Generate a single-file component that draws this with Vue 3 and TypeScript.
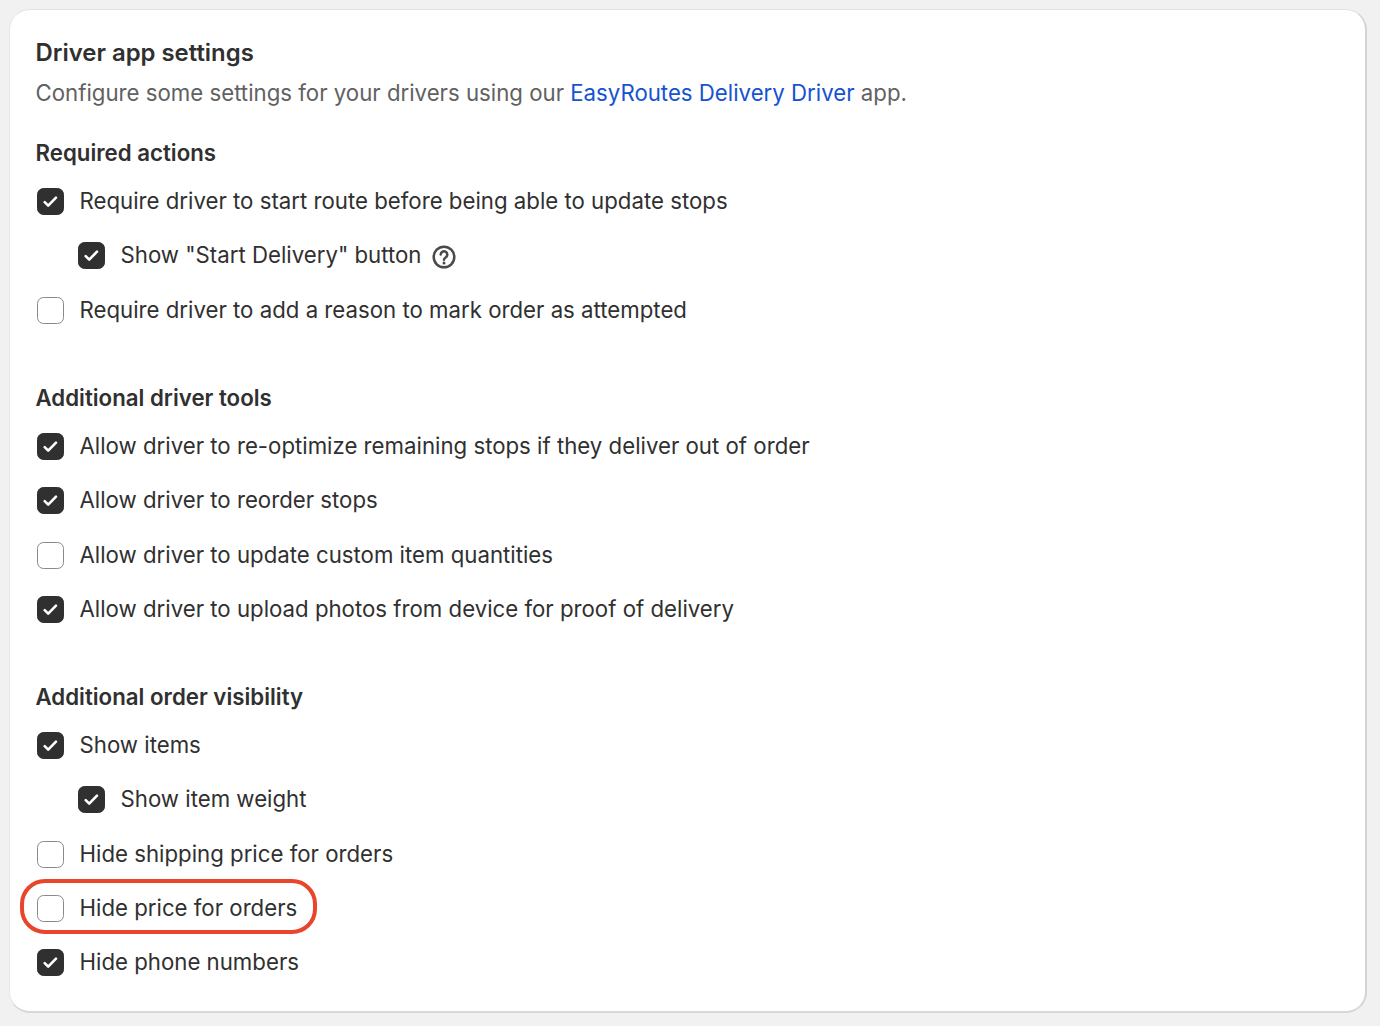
<script setup lang="ts">
interface Row { label: string; checked: boolean; nested?: boolean; help?: boolean; marked?: boolean }
interface Section { title: string; rows: Row[] }
const sections: Section[] = [
  { title: 'Required actions', rows: [
    { label: 'Require driver to start route before being able to update stops', checked: true },
    { label: 'Show "Start Delivery" button', checked: true, nested: true, help: true },
    { label: 'Require driver to add a reason to mark order as attempted', checked: false },
  ] },
  { title: 'Additional driver tools', rows: [
    { label: 'Allow driver to re-optimize remaining stops if they deliver out of order', checked: true },
    { label: 'Allow driver to reorder stops', checked: true },
    { label: 'Allow driver to update custom item quantities', checked: false },
    { label: 'Allow driver to upload photos from device for proof of delivery', checked: true },
  ] },
  { title: 'Additional order visibility', rows: [
    { label: 'Show items', checked: true },
    { label: 'Show item weight', checked: true, nested: true },
    { label: 'Hide shipping price for orders', checked: false },
    { label: 'Hide price for orders', checked: false, marked: true },
    { label: 'Hide phone numbers', checked: true },
  ] },
]
</script>

<template>
  <div class="page">
    <main class="card">
      <h1 class="title">Driver app settings</h1>
      <p class="sub">Configure some settings for your drivers using our <a class="link">EasyRoutes Delivery Driver</a> app.</p>
      <section v-for="s in sections" :key="s.title" class="section">
        <h2 class="heading">{{ s.title }}</h2>
        <div class="rows">
          <label v-for="r in s.rows" :key="r.label" class="row" :class="{ nested: r.nested }">
            <span class="box" :class="{ on: r.checked }">
              <svg v-if="r.checked" viewBox="0 0 27 27" width="27" height="27">
                <path d="M7.7 14.2l3.5 3.5L19 9.7" fill="none" stroke="#fff" stroke-width="2.6" stroke-linecap="round" stroke-linejoin="round" />
              </svg>
            </span>
            <span class="text">{{ r.label }}</span>
            <svg v-if="r.help" class="help" viewBox="0 0 24 24" width="24" height="24">
              <circle cx="12" cy="12" r="10.3" fill="none" stroke="#4a4a4a" stroke-width="2.5" />
              <path d="M8.7 9.6a3.3 3.2 0 1 1 5.2 2.6c-1.2.8-1.9 1.4-1.9 2.6" fill="none" stroke="#4a4a4a" stroke-width="2.5" stroke-linecap="round" />
              <circle cx="12" cy="18" r="1.5" fill="#4a4a4a" />
            </svg>
            <span v-if="r.marked" class="mark"></span>
          </label>
        </div>
      </section>
    </main>
  </div>
</template>

<style>
html, body { margin: 0; background: #f1f1f1; }
</style>

<style scoped>
.page {
  box-sizing: border-box;
  width: 1380px;
  height: 1026px;
  padding: 9px 13px 0 9px;
  background: #f1f1f1;
  overflow: hidden;
  font-family: Inter, "Liberation Sans", sans-serif;
}
.card {
  box-sizing: border-box;
  height: 1004px;
  padding: 26px 26px 0;
  background: #fff;
  border-radius: 21px;
  border: 1px solid #e3e3e3;
  border-left-color: #e6e6e6;
  border-bottom: 2px solid #d9d9d9;
  border-right: 2px solid #d4d4d4;
}
.title {
  margin: 0 0 0 -0.5px;
  height: 34px;
  font-size: 23.9px;
  line-height: 34px;
  font-weight: 600;
  color: #303030;
}
.sub {
  margin: 5.5px 0 0 -0.5px;
  font-size: 22.22px;
  line-height: 34px;
  color: #616161;
}
.link { color: #1553d0; }
.section { margin-top: 28.5px; }
.section + .section { margin-top: 59.2px; }
.heading {
  margin: 0 0 0 -0.5px;
  height: 30px;
  font-size: 22.25px;
  line-height: 30px;
  font-weight: 600;
  color: #303030;
}
.rows {
  display: flex;
  flex-direction: column;
  gap: 27.33px;
  margin-top: 20px;
}
.row {
  position: relative;
  display: flex;
  align-items: center;
  height: 27px;
  padding-left: 1px;
  color: #303030;
}
.row.nested { padding-left: 42px; }
.box {
  box-sizing: border-box;
  flex: none;
  width: 27px;
  height: 27px;
  border-radius: 6.5px;
  border: 1px solid #8a8a8a;
  background: #fff;
  margin-right: 15.5px;
  position: relative;
}
.box.on { background: #303030; border-color: #303030; }
.box svg { position: absolute; left: -1px; top: -1px; display: block; }
.text { font-size: 22.22px; line-height: 27px; white-space: nowrap; margin-bottom: 2px; }
.help { margin-left: 11px; margin-top: 2px; flex: none; }
.mark {
  position: absolute;
  left: -16px;
  top: -16px;
  width: 297px;
  height: 55px;
  box-sizing: border-box;
  border: 4.5px solid #e8452a;
  border-radius: 25px;
  pointer-events: none;
}
</style>
